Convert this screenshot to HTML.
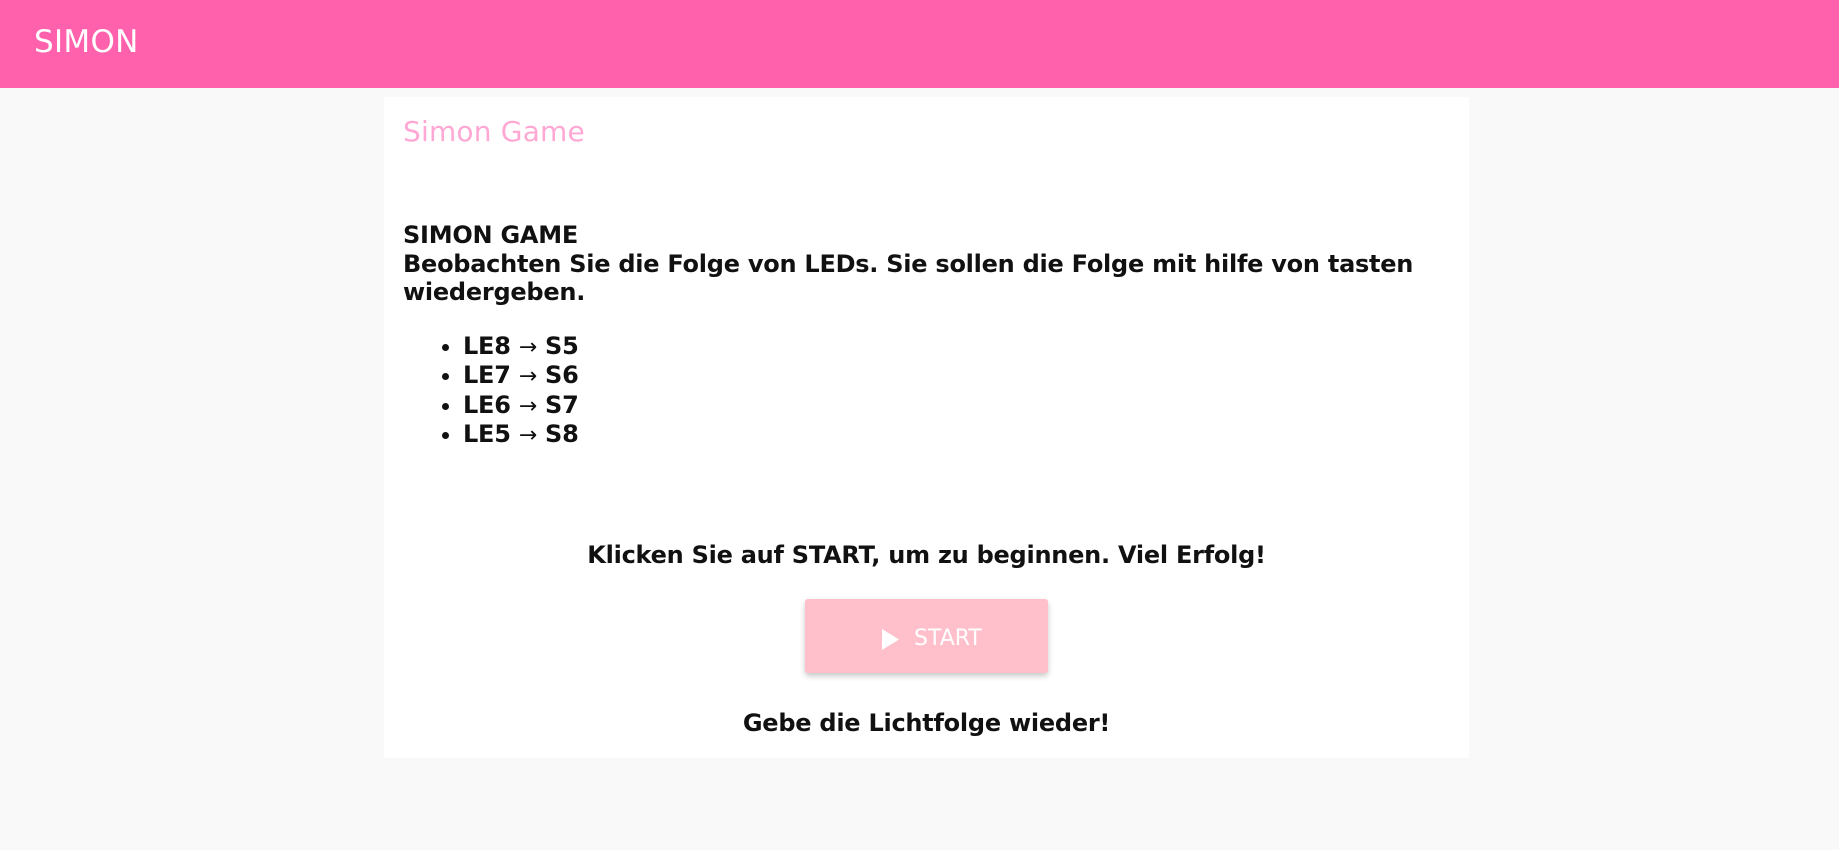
<!DOCTYPE html>
<html><head><meta charset="utf-8"><style>
*{margin:0;padding:0;box-sizing:border-box}
body{width:1839px;height:850px;background:#f9f9f9;font-family:"DejaVu Sans","Liberation Sans",sans-serif;position:relative;overflow:hidden}
.hdr{position:absolute;left:0;top:0;width:1839px;height:88px;background:#ff61ad}
.hdr span{position:absolute;left:34px;top:22px;font-size:31px;line-height:40px;color:#fff;letter-spacing:0.3px}
.card{position:absolute;left:384px;top:97px;width:1085px;height:661px;background:#fff}
.t{position:absolute;white-space:nowrap}
.b{font-weight:bold;font-size:24px;line-height:28.7px;color:#111;letter-spacing:-0.25px}
ul{position:absolute;left:19px;top:235px;padding-left:60px;margin:0}
li{height:29.4px}
.ar{font-weight:normal;font-size:22px}
</style></head><body>
<div class="hdr"><span>SIMON</span></div>
<div class="card">
<div class="t" style="left:19px;top:17px;font-size:28px;line-height:36px;color:#ffa8d4;letter-spacing:0.2px">Simon Game</div>
<div class="t b" style="left:19px;top:124px">SIMON GAME<br>Beobachten Sie die Folge von LEDs. Sie sollen die Folge mit hilfe von tasten<br>wiedergeben.</div>
<ul class="b">
<li>LE8 <span class="ar">→</span> S5</li>
<li>LE7 <span class="ar">→</span> S6</li>
<li>LE6 <span class="ar">→</span> S7</li>
<li>LE5 <span class="ar">→</span> S8</li>
</ul>
<div class="t b" style="left:0;width:1085px;text-align:center;top:444px">Klicken Sie auf START, um zu beginnen. Viel Erfolg!</div>
<div style="position:absolute;left:421px;top:502px;width:243px;height:74px;background:#ffc0cb;border-radius:3px;box-shadow:0 3px 6px rgba(0,0,0,.22)">
<svg style="position:absolute;left:77px;top:30px" width="17" height="21" viewBox="0 0 17 21"><path d="M0 0 L17 10.5 L0 21Z" fill="#fff"/></svg>
<div class="t" style="left:109px;top:26px;font-size:22px;line-height:28px;color:#fff">START</div>
</div>
<div class="t b" style="left:0;width:1085px;text-align:center;top:612px">Gebe die Lichtfolge wieder!</div>
</div>
</body></html>
